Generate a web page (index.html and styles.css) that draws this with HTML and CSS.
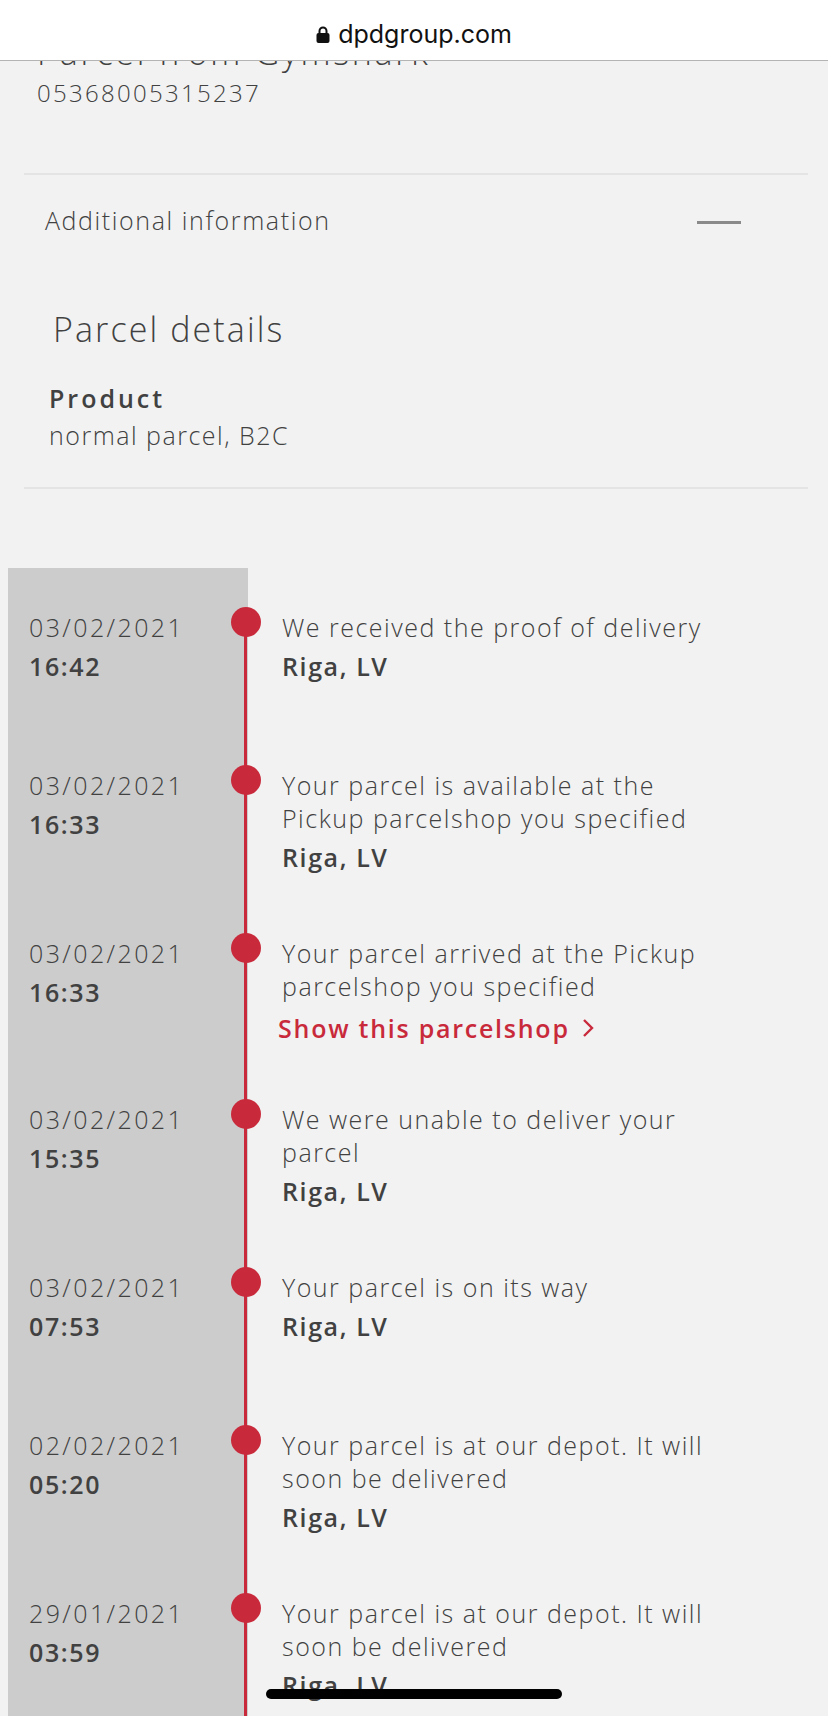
FILE: index.html
```html
<!DOCTYPE html>
<html lang="en">
<head>
<meta charset="utf-8">
<title>DPD tracking</title>
<link rel="stylesheet" href="styles.css">
</head>
<body>
<header class="urlbar">
  <svg class="lock" width="14" height="17" viewBox="0 0 14 17" aria-hidden="true">
    <path d="M3.5 7V5a3.5 3.5 0 0 1 7 0v2" fill="none" stroke="#111" stroke-width="2"/>
    <rect x="0.5" y="7" width="13" height="10" rx="2" fill="#111"/>
  </svg>
  <span class="url">dpdgroup.com</span>
</header>

<main class="page">
  <section class="parcel-head">
    <h1 class="parcel-title">Parcel from Gymshark</h1>
    <p class="parcel-number">05368005315237</p>
  </section>

  <section class="additional">
    <div class="additional-header">
      <span class="additional-label">Additional information</span>
      <span class="collapse-dash"></span>
    </div>
    <h2 class="details-title">Parcel details</h2>
    <div class="detail">
      <div class="detail-label">Product</div>
      <div class="detail-value">normal parcel, B2C</div>
    </div>
  </section>

  <section class="timeline">
    <div class="event">
      <div class="event-when"><div class="date">03/02/2021</div><div class="time">16:42</div></div>
      <div class="event-what"><div class="desc">We received the proof of delivery</div><div class="place">Riga, LV</div></div>
    </div>
    <div class="event">
      <div class="event-when"><div class="date">03/02/2021</div><div class="time">16:33</div></div>
      <div class="event-what"><div class="desc">Your parcel is available at the Pickup parcelshop you specified</div><div class="place">Riga, LV</div></div>
    </div>
    <div class="event">
      <div class="event-when"><div class="date">03/02/2021</div><div class="time">16:33</div></div>
      <div class="event-what"><div class="desc">Your parcel arrived at the Pickup parcelshop you specified</div>
        <a class="shop-link" href="#">Show this parcelshop
          <svg class="chev" width="12" height="20" viewBox="0 0 12 20" aria-hidden="true"><path d="M2 2l8 8-8 8" fill="none" stroke="#c92a3b" stroke-width="2.4"/></svg>
        </a>
      </div>
    </div>
    <div class="event">
      <div class="event-when"><div class="date">03/02/2021</div><div class="time">15:35</div></div>
      <div class="event-what"><div class="desc">We were unable to deliver your parcel</div><div class="place">Riga, LV</div></div>
    </div>
    <div class="event">
      <div class="event-when"><div class="date">03/02/2021</div><div class="time">07:53</div></div>
      <div class="event-what"><div class="desc">Your parcel is on its way</div><div class="place">Riga, LV</div></div>
    </div>
    <div class="event">
      <div class="event-when"><div class="date">02/02/2021</div><div class="time">05:20</div></div>
      <div class="event-what"><div class="desc">Your parcel is at our depot. It will soon be delivered</div><div class="place">Riga, LV</div></div>
    </div>
    <div class="event">
      <div class="event-when"><div class="date">29/01/2021</div><div class="time">03:59</div></div>
      <div class="event-what"><div class="desc">Your parcel is at our depot. It will soon be delivered</div><div class="place">Riga, LV</div></div>
    </div>
  </section>
</main>

<div class="home-indicator"></div>
</body>
</html>
```

FILE: styles.css
```css
* { box-sizing: border-box; }

html, body {
  margin: 0;
  padding: 0;
  background: #f2f2f2;
}

body {
  font-family: "Open Sans", Lato, sans-serif;
  font-weight: 300;
  color: #414141;
  height: 1716px;
  overflow: hidden;
}

.urlbar {
  height: 61px;
  background: #ffffff;
  border-bottom: 1px solid #b4b4b4;
  display: flex;
  align-items: center;
  justify-content: center;
  gap: 8px;
  padding-top: 7px;
}

.url {
  font-family: Inter, "Liberation Sans", sans-serif;
  font-weight: 400;
  font-size: 25px;
  color: #111;
}

.lock { display: block; margin-top: 2px; }

.parcel-head {
  margin: 0 20px 0 24px;
  padding: 0 0 65px 13px;
  border-bottom: 2px solid #e4e4e4;
  overflow: hidden;
}

.parcel-title {
  margin: -29px 0 0;
  font-size: 34px;
  line-height: 40px;
  font-weight: 300;
  letter-spacing: 2.75px;
}

.parcel-number {
  margin: 6px 0 0;
  font-size: 24px;
  line-height: 30px;
  letter-spacing: 2.3px;
}

.additional {
  margin: 0 20px 0 24px;
  padding: 29px 0 35px;
  border-bottom: 2px solid #e4e4e4;
}

.additional-header {
  display: flex;
  align-items: center;
  justify-content: space-between;
  padding: 0 67px 0 21px;
  font-size: 25px;
  line-height: 33px;
  letter-spacing: 1.6px;
}

.collapse-dash {
  width: 44px;
  height: 3px;
  background: #8a8a8a;
  margin-top: 4px;
}

.details-title {
  margin: 72px 0 0 29px;
  font-size: 34px;
  line-height: 40px;
  font-weight: 300;
  letter-spacing: 2.1px;
}

.detail {
  margin: 33px 0 0 25px;
  font-size: 25px;
  line-height: 33px;
}

.detail-label { font-weight: 600; letter-spacing: 3px; }
.detail-value { margin-top: 4px; letter-spacing: 1.5px; }

.timeline {
  margin: 79px 0 0 8px;
  padding-top: 23px;
  background: linear-gradient(to right, #cccccc 240px, transparent 240px);
}

.event {
  position: relative;
  display: grid;
  grid-template-columns: 240px 1fr;
  min-height: 158px;
  padding: 20px 0 43px;
  font-size: 25px;
  line-height: 33px;
}

.event::before {
  content: "";
  position: absolute;
  left: 236px;
  top: 0;
  bottom: 0;
  width: 3px;
  background: #c92a3b;
}

.event:first-child::before { top: 31px; }

.event::after {
  content: "";
  position: absolute;
  left: 223px;
  top: 16px;
  width: 30px;
  height: 30px;
  border-radius: 50%;
  background: #c92a3b;
}

.event-when { padding-left: 21px; }

.date { letter-spacing: 2.4px; }

.time, .place {
  font-weight: 600;
  margin-top: 6px;
  letter-spacing: 1.6px;
}

.event-what {
  padding: 0 104px 0 34px;
}

.desc { letter-spacing: 1.5px; }

.shop-link {
  display: flex;
  width: fit-content;
  align-items: center;
  gap: 12px;
  margin: 13px 0 0 -4px;
  line-height: 24px;
  color: #c92a3b;
  font-weight: 600;
  letter-spacing: 1.75px;
  text-decoration: none;
}

.home-indicator {
  position: fixed;
  left: 266px;
  bottom: 17px;
  width: 296px;
  height: 10px;
  border-radius: 5px;
  background: #000;
}
```
